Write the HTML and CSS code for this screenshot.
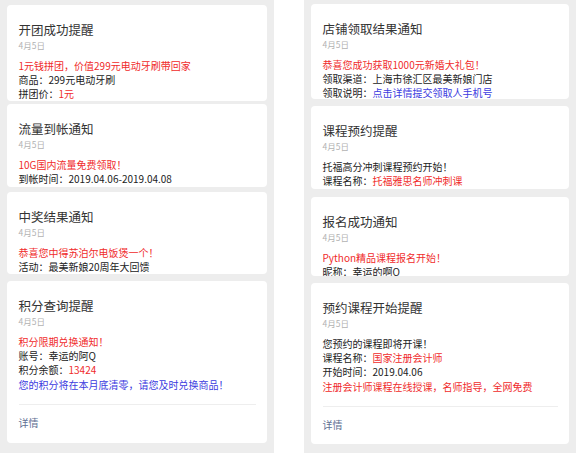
FILE: index.html
```html
<!DOCTYPE html>
<html lang="zh-CN">
<head>
<meta charset="utf-8">
<title>通知模板</title>
<link rel="stylesheet" href="styles.css">
</head>
<body>
<div class="page">
  <div class="panel panel-left">
    <div class="card l1">
      <div class="title">开团成功提醒</div>
      <div class="date">4月5日</div>
      <div class="body">
        <p class="red">1元钱拼团，价值299元电动牙刷带回家</p>
        <p>商品：299元电动牙刷</p>
        <p>拼团价：<span class="red">1元</span></p>
      </div>
    </div>
    <div class="card l2">
      <div class="title">流量到帐通知</div>
      <div class="date">4月5日</div>
      <div class="body">
        <p class="red">10G国内流量免费领取！</p>
        <p>到帐时间：2019.04.06-2019.04.08</p>
      </div>
    </div>
    <div class="card l3">
      <div class="title">中奖结果通知</div>
      <div class="date">4月5日</div>
      <div class="body">
        <p class="red">恭喜您中得苏泊尔电饭煲一个！</p>
        <p>活动：最美新娘20周年大回馈</p>
      </div>
    </div>
    <div class="card l4">
      <div class="title">积分查询提醒</div>
      <div class="date">4月5日</div>
      <div class="body">
        <p class="red">积分限期兑换通知！</p>
        <p>账号：幸运的阿Q</p>
        <p>积分余额：<span class="red">13424</span></p>
        <p class="blue">您的积分将在本月底清零，请您及时兑换商品！</p>
      </div>
      <div class="footer">详情</div>
    </div>
  </div>
  <div class="panel panel-right">
    <div class="card r1">
      <div class="title">店铺领取结果通知</div>
      <div class="date">4月5日</div>
      <div class="body">
        <p class="red">恭喜您成功获取1000元新婚大礼包！</p>
        <p>领取渠道：上海市徐汇区最美新娘门店</p>
        <p>领取说明：<span class="blue">点击详情提交领取人手机号</span></p>
      </div>
    </div>
    <div class="card r2">
      <div class="title">课程预约提醒</div>
      <div class="date">4月5日</div>
      <div class="body">
        <p>托福高分冲刺课程预约开始！</p>
        <p>课程名称：<span class="red">托福雅思名师冲刺课</span></p>
      </div>
    </div>
    <div class="card r3">
      <div class="title">报名成功通知</div>
      <div class="date">4月5日</div>
      <div class="body">
        <p class="red">Python精品课程报名开始！</p>
        <p>昵称：幸运的啊Q</p>
      </div>
    </div>
    <div class="card r4">
      <div class="title">预约课程开始提醒</div>
      <div class="date">4月5日</div>
      <div class="body">
        <p>您预约的课程即将开课！</p>
        <p>课程名称：<span class="red">国家注册会计师</span></p>
        <p>开始时间：2019.04.06</p>
        <p class="red">注册会计师课程在线授课，名师指导，全网免费</p>
      </div>
      <div class="footer">详情</div>
    </div>
  </div>
</div>
</body>
</html>
```
FILE: styles.css
```css
html, body {
  margin: 0;
  padding: 0;
  background: #ffffff;
}

body {
  font-family: "Noto Sans CJK SC", "Noto Sans", sans-serif;
  color: #222222;
}

.page {
  display: flex;
  justify-content: space-between;
  width: 576px;
  height: 453px;
  overflow: hidden;
}

.panel {
  display: flex;
  flex-direction: column;
  background: #ededed;
  height: 453px;
  box-sizing: border-box;
  padding: 0 7px;
}

.panel-left {
  width: 274px;
  padding-top: 4.5px;
}

.panel-right {
  width: 272px;
  padding-top: 4px;
}

.card {
  background: #ffffff;
  border-radius: 4px;
  overflow: hidden;
  box-sizing: border-box;
  padding: 16px 11.5px 0;
  flex: none;
}

.l1 { height: 96.5px; }
.l2 { height: 83px; margin-top: 3px; }
.l3 { height: 82px; margin-top: 5px; }
.l4 { height: 162px; margin-top: 7px; }

.r1 { height: 95px; }
.r2 { height: 83px; margin-top: 7px; }
.r3 { height: 79px; margin-top: 8px; }
.r4 { height: 161px; margin-top: 7px; }

.title {
  font-size: 12.5px;
  line-height: 18px;
  color: #333333;
}

.date {
  font-size: 8.5px;
  line-height: 13px;
  color: #b2b2b2;
}

.body {
  margin-top: 7px;
  font-size: 10px;
  line-height: 14.2px;
}

.body p {
  margin: 0;
  white-space: nowrap;
}

.red {
  color: #f02b2b;
}

.blue {
  color: #3b3be0;
}

.footer {
  margin-top: 12px;
  border-top: 1px solid #eeeeee;
  padding-top: 11px;
  font-size: 10px;
  line-height: 14px;
  color: #5f6f93;
}
```
